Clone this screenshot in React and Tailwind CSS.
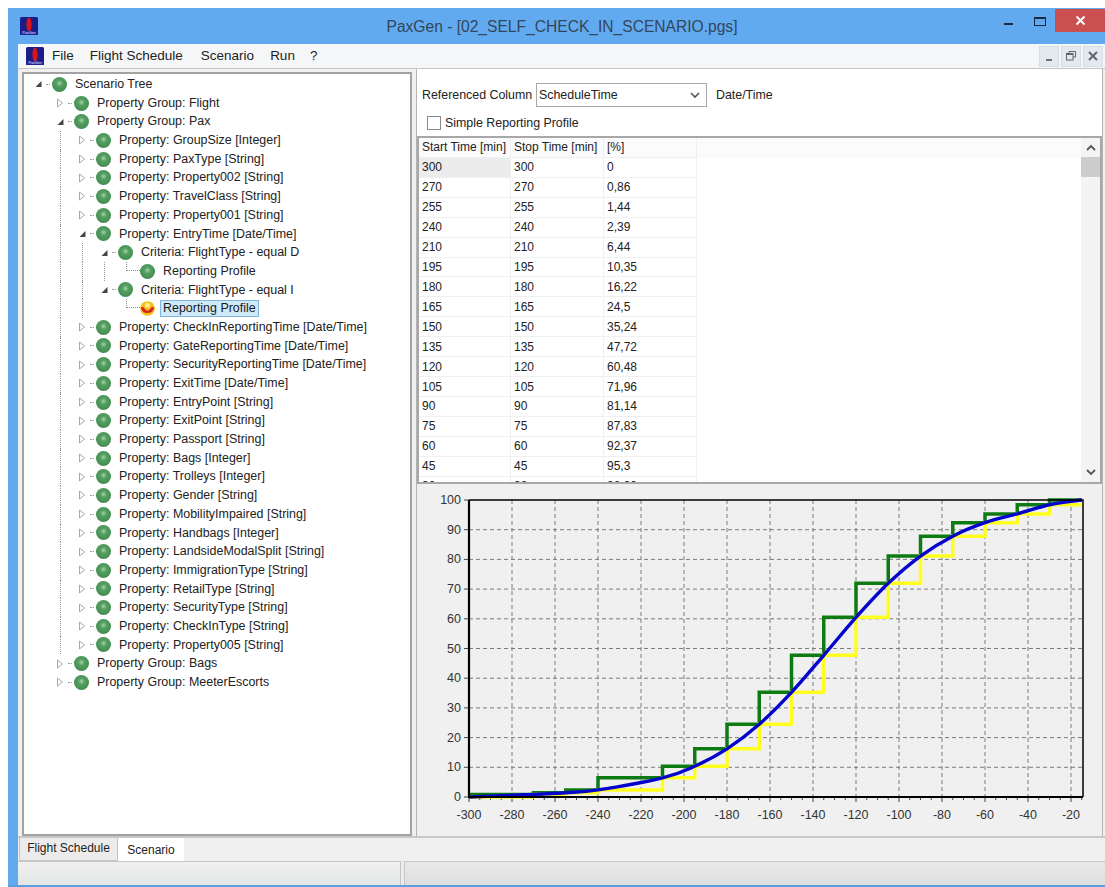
import React from 'react';

const TREE = [
  { depth: 0, open: true, label: 'Scenario Tree', guides: [] },
  { depth: 1, open: false, label: 'Property Group: Flight', guides: [0] },
  { depth: 1, open: true, label: 'Property Group: Pax', guides: [0] },
  ...['GroupSize [Integer]', 'PaxType [String]', 'Property002 [String]', 'TravelClass [String]', 'Property001 [String]'].map((p) => ({
    depth: 2, open: false, label: `Property: ${p}`, guides: [0, 1],
  })),
  { depth: 2, open: true, label: 'Property: EntryTime [Date/Time]', guides: [0, 1] },
  { depth: 3, open: true, label: 'Criteria: FlightType - equal D', guides: [0, 1, 1] },
  { depth: 4, leaf: true, label: 'Reporting Profile', guides: [0, 1, 1, 1] },
  { depth: 3, open: true, label: 'Criteria: FlightType - equal I', guides: [0, 1, 1] },
  { depth: 4, leaf: true, active: true, label: 'Reporting Profile', guides: [0, 1, 1, 0] },
  ...[
    'CheckInReportingTime [Date/Time]', 'GateReportingTime [Date/Time]', 'SecurityReportingTime [Date/Time]',
    'ExitTime [Date/Time]', 'EntryPoint [String]', 'ExitPoint [String]', 'Passport [String]', 'Bags [Integer]',
    'Trolleys [Integer]', 'Gender [String]', 'MobilityImpaired [String]', 'Handbags [Integer]',
    'LandsideModalSplit [String]', 'ImmigrationType [String]', 'RetailType [String]', 'SecurityType [String]',
    'CheckInType [String]', 'Property005 [String]',
  ].map((p) => ({ depth: 2, open: false, label: `Property: ${p}`, guides: [0, 1] })),
  { depth: 1, open: false, label: 'Property Group: Bags', guides: [0] },
  { depth: 1, open: false, label: 'Property Group: MeeterEscorts', guides: [0] },
];

// Reporting profile: minutes before departure, cumulative percentage
const PROFILE = [
  [300, 0], [270, 0.86], [255, 1.44], [240, 2.39], [210, 6.44], [195, 10.35], [180, 16.22], [165, 24.5], [150, 35.24],
  [135, 47.72], [120, 60.48], [105, 71.96], [90, 81.14], [75, 87.83], [60, 92.37], [45, 95.3], [30, 98.39], [15, 100],
];

const PLOT = { left: 52, right: 666, top: 15, bottom: 312 };
const px = (v) => PLOT.left + (v + 300) * 2.15;
const py = (p) => PLOT.bottom - p * 2.97;

function stepPath(offset) {
  let d = '';
  for (let i = 0; i < PROFILE.length - 1; i++) {
    const value = PROFILE[i + offset][1];
    const x0 = px(-PROFILE[i][0]);
    const x1 = px(-PROFILE[i + 1][0]);
    d += `${i === 0 ? 'M' : 'L'}${x0} ${py(value)} L${x1} ${py(value)} `;
  }
  return d;
}

function curvePath() {
  const pts = PROFILE.map(([t, v]) => [px(-t), py(v)]);
  let d = `M${pts[0][0]} ${pts[0][1]}`;
  for (let i = 0; i < pts.length - 1; i++) {
    const p0 = pts[Math.max(i - 1, 0)];
    const p1 = pts[i];
    const p2 = pts[i + 1];
    const p3 = pts[Math.min(i + 2, pts.length - 1)];
    d += ` C${p1[0] + (p2[0] - p0[0]) / 6} ${p1[1] + (p2[1] - p0[1]) / 6} ${p2[0] - (p3[0] - p1[0]) / 6} ${p2[1] - (p3[1] - p1[1]) / 6} ${p2[0]} ${p2[1]}`;
  }
  return d;
}

function Logo() {
  return (
    <svg width="18" height="18" viewBox="0 0 18 18" className="shrink-0">
      <rect width="18" height="18" rx="1.5" fill="#1c1c86" />
      <ellipse cx="9" cy="7.5" rx="2.6" ry="7" fill="#d8141c" />
      <rect y="14" width="18" height="4" fill="#24249a" />
      <text x="9" y="17.3" textAnchor="middle" fontSize="3.6" fill="#e8e8ff" fontFamily="Liberation Sans">PaxGen</text>
    </svg>
  );
}

function Ball({ active }) {
  if (active) {
    return (
      <svg width="15" height="15" viewBox="0 0 14 14" className="shrink-0">
        <circle cx="7" cy="7" r="6.8" fill="#f2c21c" />
        <path d="M0.8 6 A6.3 6.3 0 0 0 13.2 6 Q10.5 4.5 9.5 7.5 Q7 10.5 4.5 7.5 Q3.5 4.5 0.8 6Z" fill="#d8281c" />
        <circle cx="7" cy="4" r="2.4" fill="#ffe98a" />
      </svg>
    );
  }
  return (
    <svg width="15" height="15" viewBox="0 0 14 14" className="shrink-0">
      <defs>
        <radialGradient id="ball" cx="50%" cy="42%" r="60%">
          <stop offset="0%" stopColor="#a4d4aa" />
          <stop offset="35%" stopColor="#559f62" />
          <stop offset="100%" stopColor="#3f8a4d" />
        </radialGradient>
      </defs>
      <circle cx="7" cy="7" r="7" fill="url(#ball)" />
    </svg>
  );
}

function Expander({ open }) {
  return (
    <svg width="12" height="12" viewBox="0 0 12 12" className="shrink-0">
      {open ? (
        <path d="M9.5 3 V9 H3.5 Z" fill="#444" />
      ) : (
        <path d="M3.5 2 L8.5 6 L3.5 10 Z" fill="#fff" stroke="#a8a8a8" />
      )}
    </svg>
  );
}

function TreeRow({ node }) {
  return (
    <div className="flex h-[18.7px] items-center">
      {node.guides.map((on, i) => (
        <div key={i} className="h-full w-[22px] shrink-0">
          {on ? <div className="ml-[6px] h-full border-l border-dotted border-[#9a9a9a]" /> : null}
        </div>
      ))}
      {node.leaf ? (
        <div className="flex h-full w-[20px] shrink-0 items-start pl-[6px]">
          <div className="h-[9px] w-[14px] border-b border-l border-dotted border-[#8d8d8d]" />
        </div>
      ) : (
        <>
          <Expander open={node.open} />
          <div className="mx-[2px] w-[4px] shrink-0 border-b border-dotted border-[#9a9a9a]" />
        </>
      )}
      <Ball active={node.active} />
      {node.active ? (
        <span className="ml-[5px] border border-[#7db8dc] bg-[#cfe9f8] px-[2px] leading-[15px] whitespace-nowrap text-[#1a1a1a]">{node.label}</span>
      ) : (
        <span className="ml-[8px] whitespace-nowrap text-[#222]">{node.label}</span>
      )}
    </div>
  );
}

function Chart() {
  const xLabels = [];
  for (let v = -300; v <= -20; v += 20) xLabels.push(v);
  const yLabels = [0, 10, 20, 30, 40, 50, 60, 70, 80, 90, 100];
  const minor = [];
  for (let v = -300; v <= -15; v += 5) minor.push(v);

  return (
    <svg width="685" height="350" viewBox="0 0 685 350" className="block">
      <g stroke="#7c7c7c" strokeWidth="1" strokeDasharray="4 3">
        {xLabels.slice(1).map((v) => (
          <line key={v} x1={px(v)} x2={px(v)} y1={PLOT.top} y2={PLOT.bottom} />
        ))}
        {yLabels.slice(1, -1).map((p) => (
          <line key={p} x1={PLOT.left} x2={PLOT.right} y1={py(p)} y2={py(p)} />
        ))}
      </g>
      <g stroke="#444" strokeWidth="1">
        {minor.map((v) => (
          <line key={v} x1={px(v)} x2={px(v)} y1={PLOT.bottom} y2={PLOT.bottom + (v % 20 === 0 ? 5 : 3)} />
        ))}
        {yLabels.map((p) => (
          <line key={p} x1={PLOT.left - 5} x2={PLOT.left} y1={py(p)} y2={py(p)} />
        ))}
      </g>
      <path d={stepPath(1)} fill="none" stroke="#0d7a12" strokeWidth="3.5" />
      <path d={stepPath(0)} fill="none" stroke="#ffff1e" strokeWidth="3.5" />
      <path d={curvePath()} fill="none" stroke="#0404cc" strokeWidth="3.4" />
      <path d={`M${PLOT.left} ${PLOT.top} H${PLOT.right} V${PLOT.bottom}`} fill="none" stroke="#000" strokeWidth="1.5" />
      <path d={`M${PLOT.left} ${PLOT.top} V${PLOT.bottom} H${PLOT.right}`} fill="none" stroke="#000" strokeWidth="2.2" />
      <g fontSize="12.5" fill="#333" fontFamily="Liberation Sans">
        {yLabels.map((p) => (
          <text key={p} x={PLOT.left - 8} y={py(p) + 4} textAnchor="end">{p}</text>
        ))}
        {xLabels.map((v) => (
          <text key={v} x={px(v)} y={PLOT.bottom + 22} textAnchor="middle">{v}</text>
        ))}
      </g>
    </svg>
  );
}

function TableRow({ cells, head, selected }) {
  return (
    <div className={`flex h-[19.93px] shrink-0 ${head ? 'bg-[#fbfbfb]' : ''}`}>
      {cells.map((c, i) => (
        <div
          key={i}
          className={`flex items-center border-r border-b border-[#f0f0f0] pl-[3px] whitespace-nowrap ${i === 0 ? 'w-[92px]' : 'w-[93px]'} ${selected && i === 0 ? 'bg-[#ececec]' : ''}`}
        >
          {c}
        </div>
      ))}
    </div>
  );
}

function MdiButton({ children }) {
  return (
    <div className="flex h-[21px] w-[20px] items-center justify-center border border-[#d6dde5] bg-[#e3e9ef]">{children}</div>
  );
}

export default function App() {
  return (
    <div className="h-[887px] overflow-hidden bg-white pt-2 pl-2 font-['Liberation_Sans',sans-serif] text-[12px]">
      <div className="flex h-[879px] flex-col border-b-2 border-[#5b9fdc] bg-[#62aaf0]">
        {/* Title bar */}
        <div className="flex h-[36px] shrink-0 items-start">
          <div className="mt-[9px] ml-[12px]">
            <Logo />
          </div>
          <div className="mt-[9px] flex-1 pl-[82px] text-center text-[15.6px] leading-[20px] text-[#33465a]">
            PaxGen - [02_SELF_CHECK_IN_SCENARIO.pgs]
          </div>
          <div className="mt-[15px] h-[2px] w-[9px] bg-[#1a2c44]" />
          <div className="mt-[9px] ml-[21px] h-[9px] w-[12px] border border-t-2 border-[#1a2c44]" />
          <div className="mt-[1px] ml-[9px] flex h-[23px] w-[50px] items-center justify-center bg-[#c9504e]">
            <svg width="11" height="11" viewBox="0 0 11 11">
              <path d="M1.5 1.5 L9.5 9.5 M9.5 1.5 L1.5 9.5" stroke="#fff" strokeWidth="2" />
            </svg>
          </div>
        </div>

        <div className="ml-[10px] flex min-h-0 flex-1 flex-col bg-[#f0f0f0]">
          {/* Menu bar */}
          <div className="flex h-[25px] shrink-0 items-center border-b border-[#c6c6c6] bg-[#f5f6f7] pl-[8px] text-[13.5px] text-[#222]">
            <Logo />
            <span className="ml-[8px]">File</span>
            <span className="ml-[16px]">Flight Schedule</span>
            <span className="ml-[18px]">Scenario</span>
            <span className="ml-[16px]">Run</span>
            <span className="ml-[15px]">?</span>
            <div className="ml-auto flex gap-[2px] pr-[2px]">
              <MdiButton>
                <div className="mt-[7px] h-[2px] w-[6px] bg-[#6a7580]" />
              </MdiButton>
              <MdiButton>
                <svg width="10" height="10" viewBox="0 0 10 10" fill="none" stroke="#5d6873">
                  <path d="M3 2.5 V0.5 H9.5 V6 H7" />
                  <rect x="0.5" y="2.5" width="6.5" height="6.5" />
                  <path d="M0.5 3.5 H7" />
                </svg>
              </MdiButton>
              <MdiButton>
                <svg width="10" height="10" viewBox="0 0 10 10">
                  <path d="M1 1 L9 9 M9 1 L1 9" stroke="#5d6873" strokeWidth="2" />
                </svg>
              </MdiButton>
            </div>
          </div>

          {/* Panels */}
          <div className="flex h-[767px] shrink-0">
            <div className="mt-[3px] ml-[4px] w-[390px] shrink-0 overflow-hidden border-2 border-[#a2a2a2] bg-white pt-[1px] pl-[8px] text-[12.45px]">
              {TREE.map((node, i) => (
                <TreeRow key={i} node={node} />
              ))}
            </div>
            <div className="w-[5px] shrink-0 border-r border-[#b4b4b4]" />
            <div className="mr-[2px] flex min-w-0 flex-1 flex-col border-r border-[#b4b4b4] text-[#222]">
              <div className="h-[67px] shrink-0 bg-white pt-[14px] text-[12.4px]">
                <div className="flex h-[24px] items-center pl-[5px]">
                  <span className="w-[114px] whitespace-nowrap">Referenced Column</span>
                  <div className="flex h-[24px] w-[171px] items-center justify-between border border-[#a8a8a8] pr-[6px] pl-[2px]">
                    ScheduleTime
                    <svg width="10" height="7" viewBox="0 0 10 7" fill="none">
                      <path d="M1 1 L5 5 L9 1" stroke="#555" strokeWidth="1.6" />
                    </svg>
                  </div>
                  <span className="ml-[9px]">Date/Time</span>
                </div>
                <div className="mt-[7px] flex items-center pl-[10px]">
                  <div className="h-[14px] w-[14px] border border-[#8a8a8a] bg-white" />
                  <span className="ml-[4px]">Simple Reporting Profile</span>
                </div>
              </div>

              <div className="flex h-[348px] shrink-0 border-2 border-[#a8a8a8] bg-white">
                <div className="flex min-w-0 flex-1 flex-col overflow-hidden">
                  <TableRow head cells={['Start Time [min]', 'Stop Time [min]', '[%]']} />
                  {PROFILE.map(([t, v], i) => (
                    <TableRow key={t} selected={i === 0} cells={[t, t, String(v).replace('.', ',')]} />
                  ))}
                </div>
                <div className="flex w-[19px] shrink-0 flex-col bg-[#f4f4f4]">
                  <div className="flex h-[19px] items-center justify-center">
                    <svg width="10" height="7" viewBox="0 0 10 7" fill="none">
                      <path d="M1 6 L5 2 L9 6" stroke="#555" strokeWidth="1.8" />
                    </svg>
                  </div>
                  <div className="h-[20px] bg-[#cdcdcd]" />
                  <div className="flex-1" />
                  <div className="flex h-[19px] items-center justify-center">
                    <svg width="10" height="7" viewBox="0 0 10 7" fill="none">
                      <path d="M1 1 L5 5 L9 1" stroke="#555" strokeWidth="1.8" />
                    </svg>
                  </div>
                </div>
              </div>

              <div className="min-h-0 flex-1 overflow-hidden bg-[#f0f0f0] pt-[1px]">
                <Chart />
              </div>
            </div>
          </div>

          {/* Tabs */}
          <div className="flex h-[25px] shrink-0 border-t-2 border-[#c8c8c8] pl-[1px] text-[#222]">
            <div className="flex w-[99px] items-center justify-center border border-t-0 border-[#c4c4c4] bg-[#ececec] pb-[2px]">Flight Schedule</div>
            <div className="flex w-[66px] items-center justify-center bg-white pt-[1px]">Scenario</div>
          </div>

          {/* Status bar */}
          <div className="flex h-[24px] shrink-0 bg-gradient-to-b from-[#f0f0f0] to-[#e4e6e6]">
            <div className="h-full w-[382px] shrink-0 border-t border-[#c8c8c8]" />
            <div className="h-full w-[5px] shrink-0 border-x border-[#c4c4c4] bg-[#ececec]" />
            <div className="h-full flex-1 border-t border-[#c8c8c8] bg-gradient-to-b from-[#e8e8e8] to-[#dedfdf]" />
          </div>
        </div>
      </div>
    </div>
  );
}
